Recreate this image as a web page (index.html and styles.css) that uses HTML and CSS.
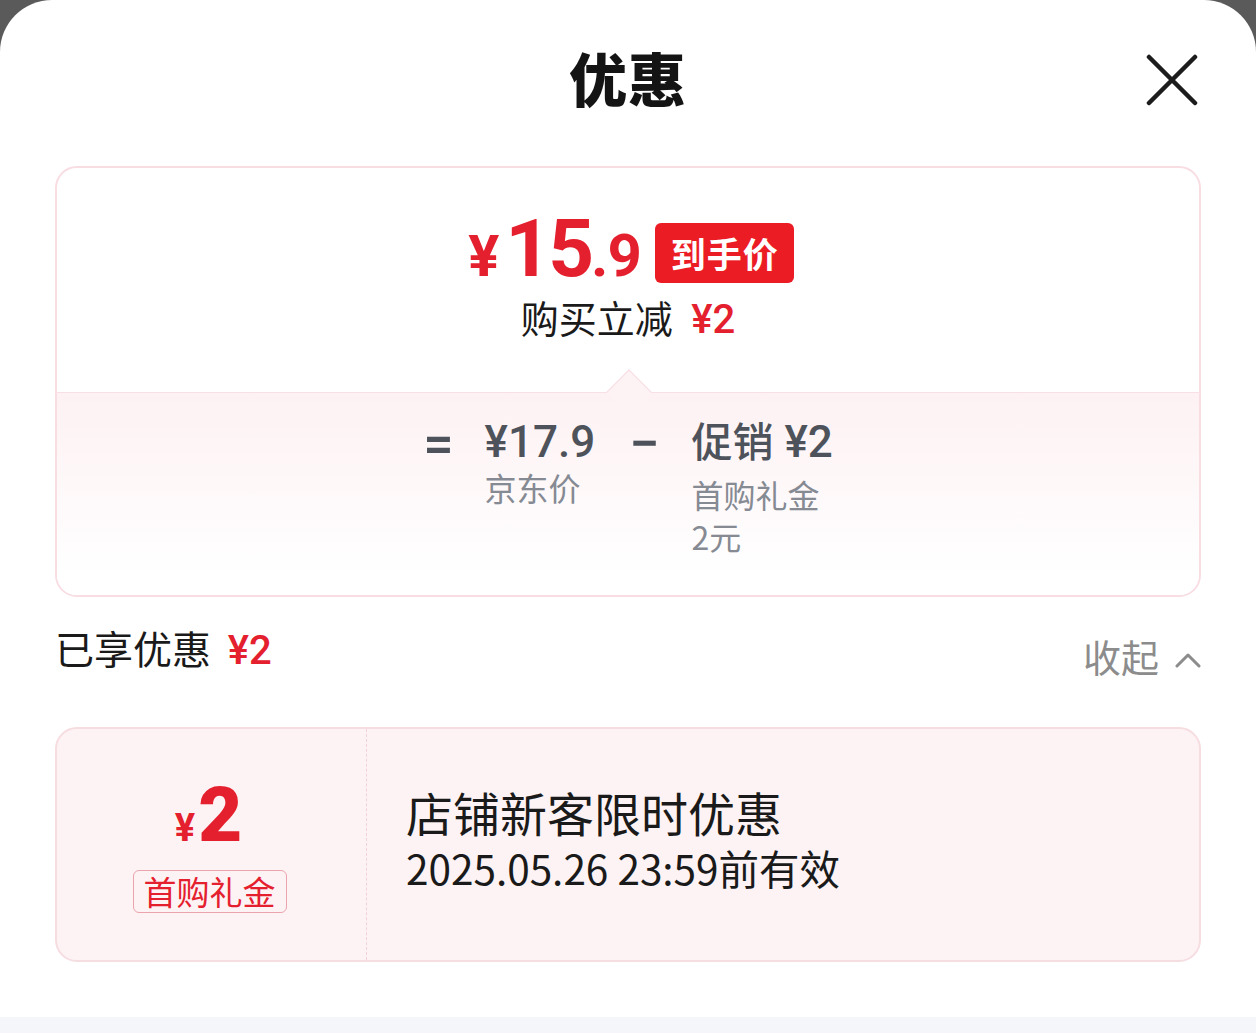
FILE: index.html
```html
<!DOCTYPE html>
<html lang="zh-CN">
  <head>
    <meta charset="UTF-8" />
    <meta name="viewport" content="width=device-width, initial-scale=1.0" />
    <title>优惠</title>
    <link rel="stylesheet" href="styles.css">
  </head>
  <body>
    <div class="sheet">
      <!-- header -->
      <div class="sheet-header">
        <h1 class="sheet-title">优惠</h1>
        <button class="close-btn" aria-label="关闭">
          <svg width="52" height="52" viewBox="0 0 52 52">
            <path d="M3 3 L49 49 M49 3 L3 49" stroke="#1c1c1c" stroke-width="4.5" stroke-linecap="round" fill="none" />
          </svg>
        </button>
      </div>

      <!-- price card -->
      <div class="price-card">
        <div class="price-top">
          <div class="price-line">
            <span class="price-yen">¥</span><span class="price-int">15</span><span class="price-dec">.9</span>
            <span class="price-badge">到手价</span>
          </div>
          <div class="price-sub">购买立减 <em class="red">¥2</em></div>
          <span class="price-notch"></span>
        </div>
        <div class="price-bottom">
          <div class="formula">
            <span class="op op-eq">=</span>
            <div class="formula-col">
              <div class="formula-val">¥17.9</div>
              <div class="formula-label">京东价</div>
            </div>
            <span class="op op-minus">−</span>
            <div class="formula-col">
              <div class="formula-val"><span class="formula-cn">促销</span> ¥2</div>
              <div class="formula-label formula-label-low">首购礼金<br>2元</div>
            </div>
          </div>
        </div>
      </div>

      <!-- enjoyed -->
      <div class="enjoyed-row">
        <div class="enjoyed-title">已享优惠 <em class="red">¥2</em></div>
        <div class="collapse">
          收起
          <svg width="26" height="16" viewBox="0 0 26 16">
            <path d="M2 14 L13 3 L24 14" stroke="#8c8c8c" stroke-width="3" fill="none" stroke-linecap="round" stroke-linejoin="round" />
          </svg>
        </div>
      </div>

      <!-- coupon -->
      <div class="coupon">
        <div class="coupon-left">
          <div class="coupon-amount"><span class="coupon-yen">¥</span>2</div>
          <span class="coupon-tag">首购礼金</span>
        </div>
        <div class="coupon-right">
          <div class="coupon-name">店铺新客限时优惠</div>
          <div class="coupon-date">2025.05.26 23:59前有效</div>
        </div>
      </div>
    </div>
    <div class="sheet-foot"></div>
  </body>
</html>
```

FILE: styles.css
```css
/*global*/
* {
  margin: 0;
  padding: 0;
  box-sizing: border-box;
}

body {
  background-color: #5a5a5a;
  font-family: "Noto Sans CJK SC", "Noto Sans", sans-serif;
  color: #1a1a1a;
}

em {
  font-style: normal;
}

.red {
  color: #e5202e;
}

/*sheet*/
.sheet {
  height: 1017px;
  background-color: #fff;
  border-radius: 52px 52px 0 0;
  padding: 0 55px;
}

.sheet-foot {
  height: 16px;
  background-color: #f4f6fa;
}

.sheet-header {
  height: 166px;
  display: flex;
  align-items: center;
  justify-content: center;
  position: relative;
  padding-bottom: 12px;
}

.sheet-title {
  font-size: 58px;
  font-weight: 900;
  letter-spacing: 1px;
  color: #141414;
}

.close-btn {
  position: absolute;
  right: 3px;
  top: 54px;
  border: none;
  background: none;
  display: flex;
}

/*price card*/
.price-card {
  border: 2px solid #f8dde3;
  border-radius: 22px;
  overflow: hidden;
  height: 431px;
}

.price-top {
  height: 224px;
  display: flex;
  flex-direction: column;
  align-items: center;
  padding-top: 46px;
  position: relative;
}

.price-line {
  display: flex;
  align-items: baseline;
  color: #e5202e;
  font-family: Roboto, "Liberation Sans", sans-serif;
  font-weight: 700;
  height: 70px;
  margin-left: 6px;
}

.price-yen {
  font-size: 58px;
  margin-right: 6px;
}

.price-int {
  font-size: 80px;
  letter-spacing: -3px;
  line-height: 70px;
}

.price-dec {
  font-size: 60px;
  letter-spacing: -1px;
}

.price-badge {
  align-self: center;
  margin-left: 14px;
  background-color: #ec1c24;
  color: #fff;
  font-family: "Noto Sans CJK SC", sans-serif;
  font-size: 35px;
  font-weight: 700;
  letter-spacing: 1px;
  border-radius: 6px;
  padding: 0 15px 0 16px;
  height: 60px;
  line-height: 60px;
  position: relative;
  top: 4px;
}

.price-sub {
  margin-top: 8px;
  font-size: 38px;
  line-height: 50px;
  color: #1a1a1a;
}

.price-sub em {
  font-family: Roboto, "Noto Sans CJK SC", sans-serif;
  font-weight: 500;
  font-size: 40px;
  margin-left: 10px;
}

.price-notch {
  position: absolute;
  left: 50%;
  bottom: -16px;
  width: 32px;
  height: 32px;
  margin-left: -15px;
  background-color: #fdf3f5;
  border-left: 1.5px solid #f8dce2;
  border-top: 1.5px solid #f8dce2;
  transform: rotate(45deg);
  z-index: 2;
}

.price-bottom {
  height: 205px;
  border-top: 1.5px solid #f8e0e5;
  background: linear-gradient(#fdf1f3, #fff 90%);
  padding-top: 25px;
}

.formula {
  display: flex;
  justify-content: center;
  align-items: flex-start;
  color: #4e535b;
  margin-left: 0;
}

.op {
  font-family: Roboto, sans-serif;
  font-size: 54px;
  font-weight: 500;
  line-height: 52px;
}

.op-eq {
  margin-right: 31px;
}

.op-minus {
  margin: 0 32px 0 34px;
}

.formula-val {
  font-family: Roboto, "Noto Sans CJK SC", sans-serif;
  font-size: 44px;
  font-weight: 500;
  line-height: 48px;
}

.formula-cn {
  font-size: 41px;
}

.formula-label {
  font-size: 32px;
  line-height: 42px;
  color: #858a93;
}

.formula-label-low {
  margin-top: 6px;
}

/*enjoyed*/
.enjoyed-row {
  display: flex;
  justify-content: space-between;
  align-items: flex-start;
  height: 130px;
  padding-top: 20px;
}

.enjoyed-title {
  font-size: 39px;
  line-height: 60px;
}

.enjoyed-title em {
  font-family: Roboto, "Noto Sans CJK SC", sans-serif;
  font-weight: 500;
  font-size: 40px;
  margin-left: 8px;
}

.collapse {
  display: flex;
  align-items: center;
  gap: 16px;
  font-size: 38px;
  line-height: 60px;
  color: #8c8c8c;
  margin-top: 9px;
}

.collapse svg {
  margin-top: 8px;
}

/*coupon*/
.coupon {
  height: 235px;
  display: flex;
  background-color: #fdf3f4;
  border: 2px solid #f6dde2;
  border-radius: 22px;
}

.coupon-left {
  width: 310px;
  border-right: 1.5px dashed #f0d2d8;
  display: flex;
  flex-direction: column;
  align-items: center;
  justify-content: center;
  padding-top: 2px;
}

.coupon-amount {
  font-family: Roboto, "Liberation Sans", sans-serif;
  font-weight: 900;
  font-size: 76px;
  line-height: 72px;
  color: #e5202e;
  margin-right: 6px;
}

.coupon-yen {
  font-size: 38px;
  font-weight: 700;
  margin-right: 3px;
}

.coupon-tag {
  margin-top: 6px;
  border: 1px solid #eba4ad;
  border-radius: 6px;
  color: #e5202e;
  font-size: 33px;
  line-height: 41px;
  padding: 0 10px;
  margin-right: 4px;
}

.coupon-right {
  display: flex;
  flex-direction: column;
  justify-content: center;
  padding-left: 39px;
  padding-bottom: 14px;
}

.coupon-name {
  font-size: 47px;
  line-height: 60px;
}

.coupon-date {
  font-size: 40.5px;
  line-height: 52px;
}
```
